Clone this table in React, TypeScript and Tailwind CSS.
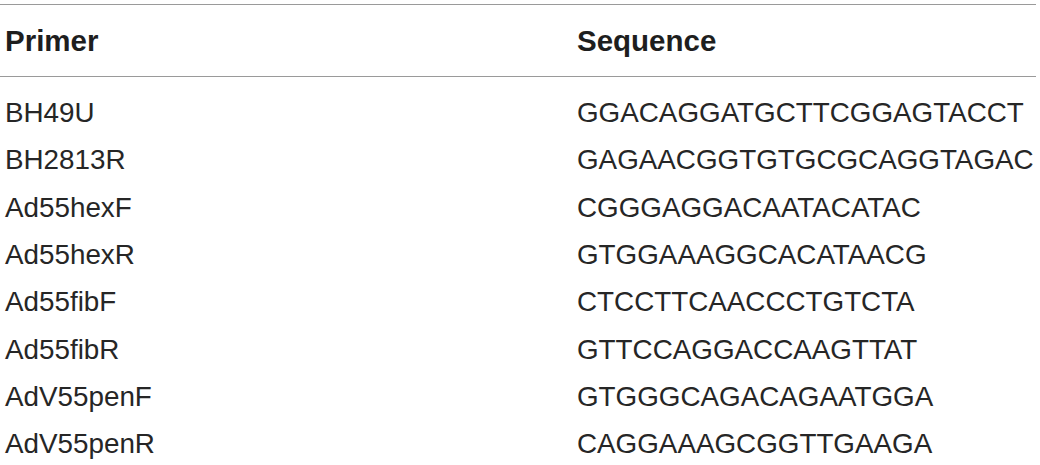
const rows = [
  ['BH49U', 'GGACAGGATGCTTCGGAGTACCT'],
  ['BH2813R', 'GAGAACGGTGTGCGCAGGTAGAC'],
  ['Ad55hexF', 'CGGGAGGACAATACATAC'],
  ['Ad55hexR', 'GTGGAAAGGCACATAACG'],
  ['Ad55fibF', 'CTCCTTCAACCCTGTCTA'],
  ['Ad55fibR', 'GTTCCAGGACCAAGTTAT'],
  ['AdV55penF', 'GTGGGCAGACAGAATGGA'],
  ['AdV55penR', 'CAGGAAAGCGGTTGAAGA'],
]

export default function App() {
  return (
    <main className="h-[465px] w-[1040px] overflow-hidden bg-white pt-[4px] font-['Liberation_Sans',Arial,sans-serif] text-[#262626]">
      <div className="w-[1036px] border-t-[1.5px] border-[#9a9a9a]">
        <div className="grid grid-cols-[572px_1fr] border-b-[1.5px] border-[#9a9a9a] pl-[5px] pt-[19px] pb-[19px] text-[29.5px] leading-[33px] font-bold text-[#1e1e1e]">
          <div>Primer</div>
          <div>Sequence</div>
        </div>
        <div className="pt-[12px]">
          {rows.map(([primer, seq]) => (
            <div key={primer} className="grid h-[47.3px] grid-cols-[572px_1fr] items-center pl-[5px] text-[27.8px] leading-[47px]">
              <div>{primer}</div>
              <div>{seq}</div>
            </div>
          ))}
        </div>
      </div>
    </main>
  )
}
